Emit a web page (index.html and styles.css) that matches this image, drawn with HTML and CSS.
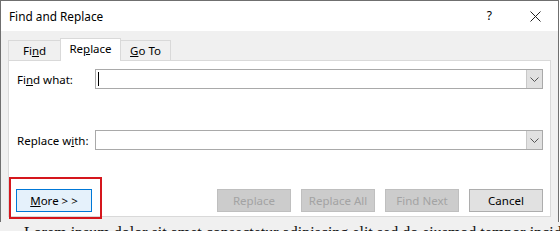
FILE: index.html
```html
<!DOCTYPE html>
<html lang="en">
<head>
    <meta charset="UTF-8">
    <title>Find and Replace</title>
    <link rel="stylesheet" href="styles.css">
</head>
<body>
    <div class="dialog">
        <div class="titlebar">
            <span class="title">Find and Replace</span>
            <span class="help">?</span>
            <svg class="close" width="11" height="11" viewBox="0 0 11 11">
                <path d="M0.5 0.5 L10.5 10.5 M10.5 0.5 L0.5 10.5" stroke="#222" stroke-width="1" fill="none"/>
            </svg>
        </div>

        <div class="content">
            <div class="tabs">
                <div class="tab tab-find">Fi<u>n</u>d</div>
                <div class="tab active">Re<u>p</u>lace</div>
                <div class="tab tab-goto"><u>G</u>o To</div>
            </div>

            <div class="panel">
                <div class="row">
                    <label>Fi<u>n</u>d what:</label>
                    <div class="combo">
                        <div class="field"><span class="caret"></span></div>
                        <div class="drop">
                            <svg width="9" height="5" viewBox="0 0 9 5"><path d="M0.5 0.5 L4.5 4.5 L8.5 0.5" stroke="#555" fill="none"/></svg>
                        </div>
                    </div>
                </div>

                <div class="row row-replace">
                    <label>Replace w<u>i</u>th:</label>
                    <div class="combo">
                        <div class="field"></div>
                        <div class="drop">
                            <svg width="9" height="5" viewBox="0 0 9 5"><path d="M0.5 0.5 L4.5 4.5 L8.5 0.5" stroke="#555" fill="none"/></svg>
                        </div>
                    </div>
                </div>

                <div class="actions">
                    <div class="more-wrap">
                        <button class="btn btn-more"><u>M</u>ore &gt; &gt;</button>
                    </div>
                    <div class="right-btns">
                        <button class="btn" disabled>Replace</button>
                        <button class="btn" disabled>Replace All</button>
                        <button class="btn" disabled>Find Next</button>
                        <button class="btn btn-cancel">Cancel</button>
                    </div>
                </div>
            </div>
        </div>
    </div>

    <div class="doc">
        <p>Lorem ipsum dolor sit amet consectetur adipiscing elit sed do eiusmod tempor incididunt ut labore et dolore magna aliqua enim minim veniam</p>
    </div>
</body>
</html>
```

FILE: styles.css
```css
* {
    box-sizing: border-box;
}

body {
    margin: 0;
    width: 560px;
    height: 231px;
    overflow: hidden;
    background: #fff;
    font-family: "Noto Sans", "Open Sans", sans-serif;
    font-size: 11.5px;
    color: #000;
}

.dialog {
    width: 559px;
    border: 1px solid #6f6f6f;
    border-bottom: none;
    background: #f0f0f0;
}

.titlebar {
    height: 30px;
    background: #fff;
    display: flex;
    align-items: center;
    padding-left: 8px;
}

.title {
    flex: 1;
    font-size: 11.8px;
}

.help {
    font-size: 12px;
    margin-right: 38px;
    margin-top: -1px;
}

.close {
    margin-right: 17px;
}

.content {
    padding: 8px 7px 5px 7px;
}

.tabs {
    display: flex;
    align-items: flex-end;
    height: 21px;
}

.tab {
    height: 20px;
    border: 1px solid #d9d9d9;
    border-bottom: none;
    background: #f0f0f0;
    line-height: 19px;
    text-align: center;
    margin-right: -1px;
}

.tab-find {
    width: 53px;
}

.tab.active {
    width: 61px;
    height: 23px;
    margin-bottom: -1px;
    background: #fff;
    position: relative;
    z-index: 1;
    line-height: 20px;
}

.tab-goto {
    width: 51px;
}

.panel {
    height: 157px;
    background: #fff;
    border: 1px solid #d9d9d9;
    padding: 8px 7px 0 7px;
}

.row {
    display: flex;
    align-items: center;
    height: 20px;
}

.row-replace {
    margin-top: 41px;
}

.row label {
    width: 79px;
    padding-left: 1px;
}

.combo {
    flex: 1;
    display: flex;
    height: 20px;
    border: 1px solid #a9a9a9;
}

.field {
    flex: 1;
    display: flex;
    align-items: center;
    padding-left: 2px;
}

.caret {
    width: 1px;
    height: 14px;
    background: #000;
}

.drop {
    width: 16px;
    background: #e1e1e1;
    border-left: 1px solid #c8c8c8;
    display: flex;
    align-items: center;
    justify-content: center;
}

.actions {
    display: flex;
    align-items: flex-end;
    margin-top: 27px;
}

.more-wrap {
    margin-left: -7px;
    border: 2px solid #d5171d;
    padding: 10px 8px 5px 5px;
    margin-bottom: -1px;
}

.btn {
    width: 74px;
    height: 23px;
    border: 1px solid #adadad;
    background: #e1e1e1;
    font-family: inherit;
    font-size: 11.5px;
    color: #000;
    padding: 0;
}

.btn:disabled {
    background: #cccccc;
    border-color: #bfbfbf;
    color: #a3a3a3;
}

.btn-more {
    width: 76px;
    background: #e5f1fb;
    border-color: #0078d7;
}

.right-btns {
    margin-left: auto;
    display: flex;
    gap: 10px;
    margin-bottom: 6px;
}

.doc {
    height: 9px;
    overflow: hidden;
    padding-left: 24px;
    background: #f0f0f0;
}

.doc p {
    margin: 3px 0 0;
    font-family: "Liberation Serif", serif;
    font-size: 16px;
    line-height: 16px;
    white-space: nowrap;
    color: #111;
}
```
